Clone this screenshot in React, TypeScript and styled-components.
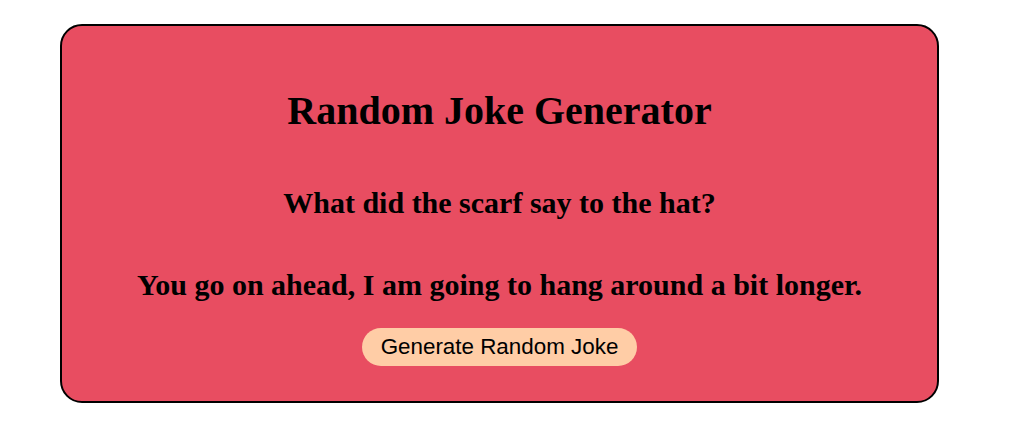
import React from "react";
import styled, { createGlobalStyle } from "styled-components";

const Global = createGlobalStyle`
  body {
    margin: 8px;
    background: #ffffff;
    font-family: "Liberation Serif", "Times New Roman", serif;
  }
`;

const Card = styled.div`
  box-sizing: border-box;
  width: 879px;
  height: 379px;
  margin: 16px 0 0 52px;
  padding: 62px 20px 0;
  background: #e84d61;
  border: 2px solid #000;
  border-radius: 22px;
  display: flex;
  flex-direction: column;
  align-items: center;
  text-align: center;
  color: #000;
`;

const Title = styled.h1`
  margin: 0;
  font-size: 40px;
  line-height: 46px;
  font-weight: bold;
`;

const Line = styled.h2<{ $top: number }>`
  margin: ${(p) => p.$top}px 0 0;
  font-size: 30px;
  line-height: 34px;
  font-weight: bold;
`;

const Button = styled.button`
  margin-top: 26px;
  padding: 6px 19px 7px;
  border: none;
  border-radius: 20px;
  background: #ffcda6;
  color: #000;
  font-family: "Liberation Sans", Arial, sans-serif;
  font-size: 22.4px;
  line-height: 25px;
  cursor: pointer;
`;

export default function App() {
  return (
    <>
      <Global />
      <Card>
        <Title>Random Joke Generator</Title>
        <Line $top={52}>What did the scarf say to the hat?</Line>
        <Line $top={48}>You go on ahead, I am going to hang around a bit longer.</Line>
        <Button>Generate Random Joke</Button>
      </Card>
    </>
  );
}
